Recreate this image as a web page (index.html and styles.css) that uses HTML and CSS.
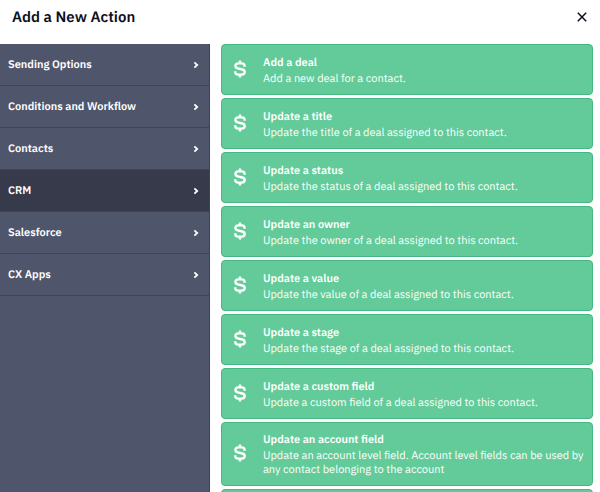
FILE: index.html
```
<!DOCTYPE html>
<html lang="en">
<head>
    <meta charset="UTF-8">
    <meta name="viewport" content="width=device-width, initial-scale=1.0">
    <title>Add a New Action</title>
    <link rel="stylesheet" href="styles.css">
</head>
<body>
    <svg class="symbols" aria-hidden="true">
        <symbol id="chevron" viewBox="0 0 6 8">
            <path d="M1.4 1.4 L4.2 4 L1.4 6.6" />
        </symbol>
        <symbol id="dollar" viewBox="0 0 12 18">
            <path d="M6 0.5 V3.4 M6 14.6 V17.5 M10.6 6.8 V6 C10.6 4.4 9.5 3.4 7.8 3.4 H4.2 C2.5 3.4 1.4 4.4 1.4 5.8 C1.4 7.3 2.2 8 3.7 8.3 L8.3 9.5 C9.9 9.9 10.7 10.8 10.7 12.1 C10.7 13.7 9.5 14.6 7.8 14.6 H4.2 C2.5 14.6 1.3 13.7 1.3 12 V11.2" />
        </symbol>
    </svg>

    <div class="modal">
        <header class="modal-header">
            <h1>Add a New Action</h1>
            <button class="close" aria-label="Close">
                <svg viewBox="0 0 10 10"><path d="M0.8 0.8 L9.2 9.2 M9.2 0.8 L0.8 9.2" /></svg>
            </button>
        </header>

        <div class="modal-body">
            <nav class="sidebar">
                <button class="category">Sending Options <svg><use href="#chevron" /></svg></button>
                <button class="category">Conditions and Workflow <svg><use href="#chevron" /></svg></button>
                <button class="category">Contacts <svg><use href="#chevron" /></svg></button>
                <button class="category active">CRM <svg><use href="#chevron" /></svg></button>
                <button class="category">Salesforce <svg><use href="#chevron" /></svg></button>
                <button class="category">CX Apps <svg><use href="#chevron" /></svg></button>
            </nav>

            <main class="actions">
                <button class="action">
                    <svg><use href="#dollar" /></svg>
                    <span class="action-text">
                        <strong>Add a deal</strong>
                        <span>Add a new deal for a contact.</span>
                    </span>
                </button>
                <button class="action">
                    <svg><use href="#dollar" /></svg>
                    <span class="action-text">
                        <strong>Update a title</strong>
                        <span>Update the title of a deal assigned to this contact.</span>
                    </span>
                </button>
                <button class="action">
                    <svg><use href="#dollar" /></svg>
                    <span class="action-text">
                        <strong>Update a status</strong>
                        <span>Update the status of a deal assigned to this contact.</span>
                    </span>
                </button>
                <button class="action">
                    <svg><use href="#dollar" /></svg>
                    <span class="action-text">
                        <strong>Update an owner</strong>
                        <span>Update the owner of a deal assigned to this contact.</span>
                    </span>
                </button>
                <button class="action">
                    <svg><use href="#dollar" /></svg>
                    <span class="action-text">
                        <strong>Update a value</strong>
                        <span>Update the value of a deal assigned to this contact.</span>
                    </span>
                </button>
                <button class="action">
                    <svg><use href="#dollar" /></svg>
                    <span class="action-text">
                        <strong>Update a stage</strong>
                        <span>Update the stage of a deal assigned to this contact.</span>
                    </span>
                </button>
                <button class="action">
                    <svg><use href="#dollar" /></svg>
                    <span class="action-text">
                        <strong>Update a custom field</strong>
                        <span>Update a custom field of a deal assigned to this contact.</span>
                    </span>
                </button>
                <button class="action">
                    <svg><use href="#dollar" /></svg>
                    <span class="action-text">
                        <strong>Update an account field</strong>
                        <span>Update an account level field. Account level fields can be used by any contact belonging to the account</span>
                    </span>
                </button>
                <button class="action" aria-label="More"></button>
            </main>
        </div>
    </div>
</body>
</html>
```
FILE: styles.css
```
* {
    box-sizing: border-box;
}
body {
    margin: 0;
    font-family: "IBM Plex Sans", Roboto, "Liberation Sans", sans-serif;
    font-size: 11px;
    line-height: 14px;
    text-rendering: geometricPrecision;
    background-color: #fff;
}
button {
    border: none;
    font: inherit;
    text-rendering: inherit;
    color: #fff;
    text-align: left;
    cursor: pointer;
}
strong {
    font-weight: 600;
}
svg {
    flex: none;
    fill: none;
    stroke: currentColor;
}
.symbols {
    display: none;
}
.modal {
    display: flex;
    flex-direction: column;
    height: 100vh;
    overflow: hidden;
}
.modal-header {
    display: flex;
    flex: none;
    align-items: center;
    justify-content: space-between;
    height: 44px;
    padding: 0 13px 8px 12px;
    color: #0d0f1c;
}
h1 {
    margin: 0;
    font-size: 15px;
    line-height: 20px;
    font-weight: 600;
}
.close {
    display: flex;
    padding: 0 0 2px;
    background: none;
    color: #0d0f1c;
}
.close svg {
    width: 10px;
    height: 10px;
    stroke-width: 1.5;
}
.modal-body {
    display: flex;
    flex: 1;
    min-height: 0;
}
.sidebar {
    flex: 0 0 35%;
    background-color: #4f566b;
    border-right: 1px solid #3d4256;
}
.category {
    display: flex;
    align-items: center;
    justify-content: space-between;
    width: 100%;
    height: 42px;
    padding: 1px 10px 0 8px;
    background-color: #4f566b;
    border-bottom: 1px solid #3f4458;
    font-weight: 600;
}
.category.active {
    background-color: #373a4b;
}
.category svg {
    width: 6px;
    height: 8px;
    stroke-width: 1.8;
}
.actions {
    display: flex;
    flex: 1;
    flex-direction: column;
    gap: 3px;
    padding: 0 7px 0 11px;
    overflow: hidden;
}
.action {
    display: flex;
    flex: none;
    align-items: center;
    gap: 17px;
    min-height: 51px;
    padding: 10px 8px 8px 12px;
    background-color: #62cb99;
    border: 1px solid #45b780;
    border-radius: 4px;
}
.action svg {
    width: 12px;
    height: 22px;
    padding-bottom: 4px;
    stroke-width: 2.4;
}
.action-text {
    display: flex;
    flex-direction: column;
    gap: 2px;
}
```
